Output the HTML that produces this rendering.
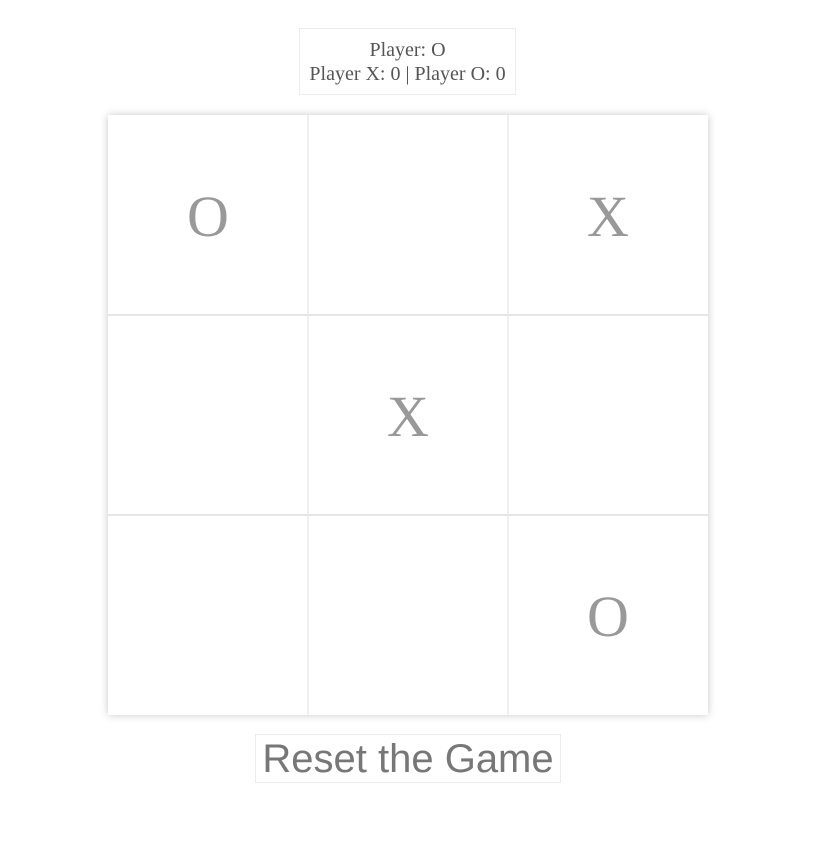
<!DOCTYPE html>
<html><head><meta charset="utf-8"><style>
html,body{margin:0;padding:0;background:#fff;width:833px;height:857px;overflow:hidden}
.info{position:absolute;left:299px;top:28px;width:217px;height:67px;border:1px solid #ececec;box-sizing:border-box;font-family:"Liberation Serif",serif;font-size:20px;color:#555;text-align:center;line-height:24px;padding-top:9px}
.board{position:absolute;left:108px;top:115px;width:600px;height:600px;box-shadow:0 0 8px rgba(0,0,0,0.22);background:#fff}
.cell{position:absolute;width:200px;height:200px;box-sizing:border-box;font-family:"Liberation Serif",serif;font-size:58px;color:#999;text-align:center;line-height:204px}
.vl{position:absolute;top:0;width:2px;height:600px;background:#efefef}
.hl{position:absolute;left:0;height:2px;width:600px;background:#e6e6e6}
.btn{position:absolute;left:255px;top:734px;width:306px;height:49px;border:1px solid #ececec;box-sizing:border-box;font-family:"Liberation Sans",sans-serif;font-size:40px;color:#777;text-align:center;line-height:48px}
</style></head><body>
<div class="info">Player: O<br>Player X: 0 | Player O: 0</div>
<div class="board">
<div class="vl" style="left:199px"></div><div class="vl" style="left:399px"></div>
<div class="hl" style="top:199px"></div><div class="hl" style="top:399px"></div>
<div class="cell" style="left:0;top:0">O</div>
<div class="cell" style="left:400px;top:0">X</div>
<div class="cell" style="left:200px;top:200px">X</div>
<div class="cell" style="left:400px;top:400px">O</div>
</div>
<div class="btn">Reset the Game</div>
</body></html>
